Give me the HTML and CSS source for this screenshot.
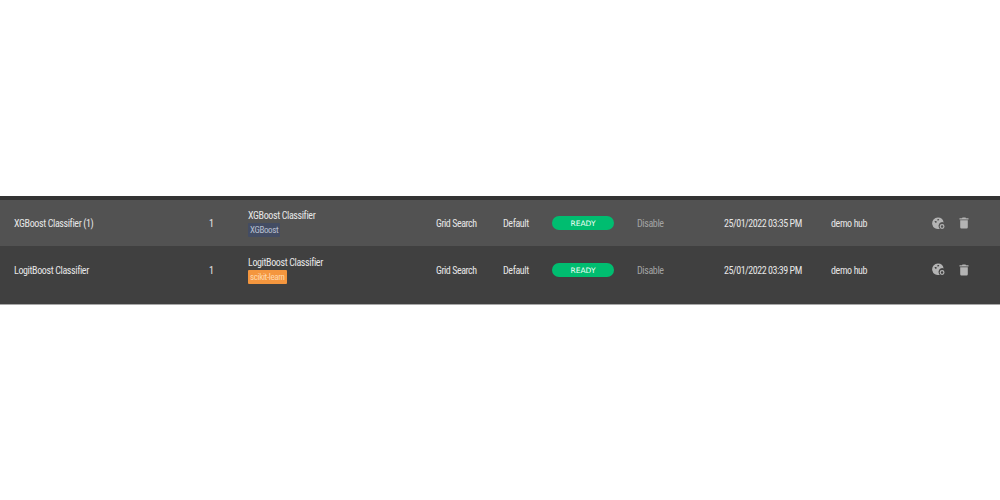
FILE: index.html
```html
<!DOCTYPE html>
<html lang="en">
<head>
<meta charset="utf-8">
<title>Models</title>
<link rel="stylesheet" href="styles.css">
</head>
<body>
<main class="table">
  <div class="row row-light">
    <div class="cell name">XGBoost Classifier (1)</div>
    <div class="cell count">1</div>
    <div class="cell model"><span class="model-title">XGBoost Classifier</span><span class="tag tag-blue">XGBoost</span></div>
    <div class="cell search">Grid Search</div>
    <div class="cell def">Default</div>
    <div class="cell status"><span class="pill">READY</span></div>
    <div class="cell toggle">Disable</div>
    <div class="cell date">25/01/2022 03:35 PM</div>
    <div class="cell hub">demo hub</div>
    <div class="cell actions">
      <svg class="icon" viewBox="0 0 12 12"><path d="M5.500.5a5.300 5.300 0 1 0 1.700 10.300 3.400 3.400 0 0 1-1-3.500 3.300 3.300 0 0 1 4.500-2.300A5.300 5.300 0 0 0 5.500.5zM2.300 3.600h1.900v1.700H3zM5 1.900h1.700L6.100 3.300H5z" fill-rule="evenodd"/><circle cx="9.300" cy="8.800" r="1.700"/></svg>
      <svg class="icon trash" viewBox="0 0 10 12"><path d="M3.500.5h3l.5.800h2.500v1.200H.5V1.300H3zM1.200 3.200h7.600v7.100a1.200 1.200 0 0 1-1.200 1.200H2.400a1.200 1.200 0 0 1-1.200-1.200z"/></svg>
    </div>
  </div>
  <div class="row row-dark">
    <div class="cell name">LogitBoost Classifier</div>
    <div class="cell count">1</div>
    <div class="cell model"><span class="model-title">LogitBoost Classifier</span><span class="tag tag-orange">scikit-learn</span></div>
    <div class="cell search">Grid Search</div>
    <div class="cell def">Default</div>
    <div class="cell status"><span class="pill">READY</span></div>
    <div class="cell toggle">Disable</div>
    <div class="cell date">25/01/2022 03:39 PM</div>
    <div class="cell hub">demo hub</div>
    <div class="cell actions">
      <svg class="icon" viewBox="0 0 12 12"><path d="M5.500.5a5.300 5.300 0 1 0 1.700 10.300 3.400 3.400 0 0 1-1-3.500 3.300 3.300 0 0 1 4.500-2.300A5.300 5.300 0 0 0 5.500.5zM2.300 3.600h1.900v1.700H3zM5 1.900h1.700L6.100 3.300H5z" fill-rule="evenodd"/><circle cx="9.300" cy="8.800" r="1.700"/></svg>
      <svg class="icon trash" viewBox="0 0 10 12"><path d="M3.500.5h3l.5.800h2.500v1.200H.5V1.300H3zM1.200 3.200h7.600v7.100a1.200 1.200 0 0 1-1.200 1.200H2.400a1.200 1.200 0 0 1-1.200-1.200z"/></svg>
    </div>
  </div>
</main>
</body>
</html>
```
FILE: styles.css
```css
* { box-sizing: border-box; }
html, body { margin: 0; background: #fff; }
body { padding-top: 196px; height: 500px; overflow: hidden; }
.table {
  border-top: 4px solid #333;
  border-bottom: 1px solid #a8a8a8;
  font-family: Roboto, "Liberation Sans", sans-serif;
  font-size: 10px;
  font-stretch: 75%;
  letter-spacing: -0.37px;
  color: #e6e6e6;
}
.row { display: flex; padding-left: 14px; }
.row-light { background: #525252; height: 46px; align-items: center; }
.row-dark { background: #404040; height: 58px; align-items: flex-start; padding-top: 18px; }
.row-dark .model { margin-top: -8px; }
.row-dark .status, .row-dark .actions { margin-top: -1px; }
.cell { white-space: nowrap; line-height: 12px; padding-top: 1px; }
.name { width: 195px; }
.count { width: 39px; }
.model { width: 188px; display: flex; flex-direction: column; align-items: flex-start; gap: 1px; }
.search { width: 67px; letter-spacing: -0.46px; }
.def { width: 49px; }
.status { width: 85px; padding-top: 0; }
.toggle { width: 87px; color: #a3a3a3; }
.date { width: 107px; letter-spacing: -0.47px; }
.hub { width: 101px; }
.actions { display: flex; align-items: center; gap: 14px; padding-top: 0; }
.tag { font-size: 9px; line-height: 14px; padding: 0 2px; border-radius: 1px; }
.tag-blue { background: #434c63; color: #b9c0d2; }
.tag-orange { background: #f4963e; color: #ffd9ae; }
.pill {
  display: block;
  width: 62px;
  height: 14px;
  border-radius: 7px;
  background: #00bd70;
  color: #f2fff8;
  font-family: "DejaVu Sans", sans-serif;
  font-size: 7.500px;
  font-stretch: 100%;
  letter-spacing: 0;
  line-height: 15px;
  text-align: center;
}
.icon { width: 13px; height: 13px; fill: #b4b4b4; display: block; }
.icon circle { fill: none; stroke: #b4b4b4; stroke-width: 1.100; }
.trash { width: 10px; height: 12px; }
```
